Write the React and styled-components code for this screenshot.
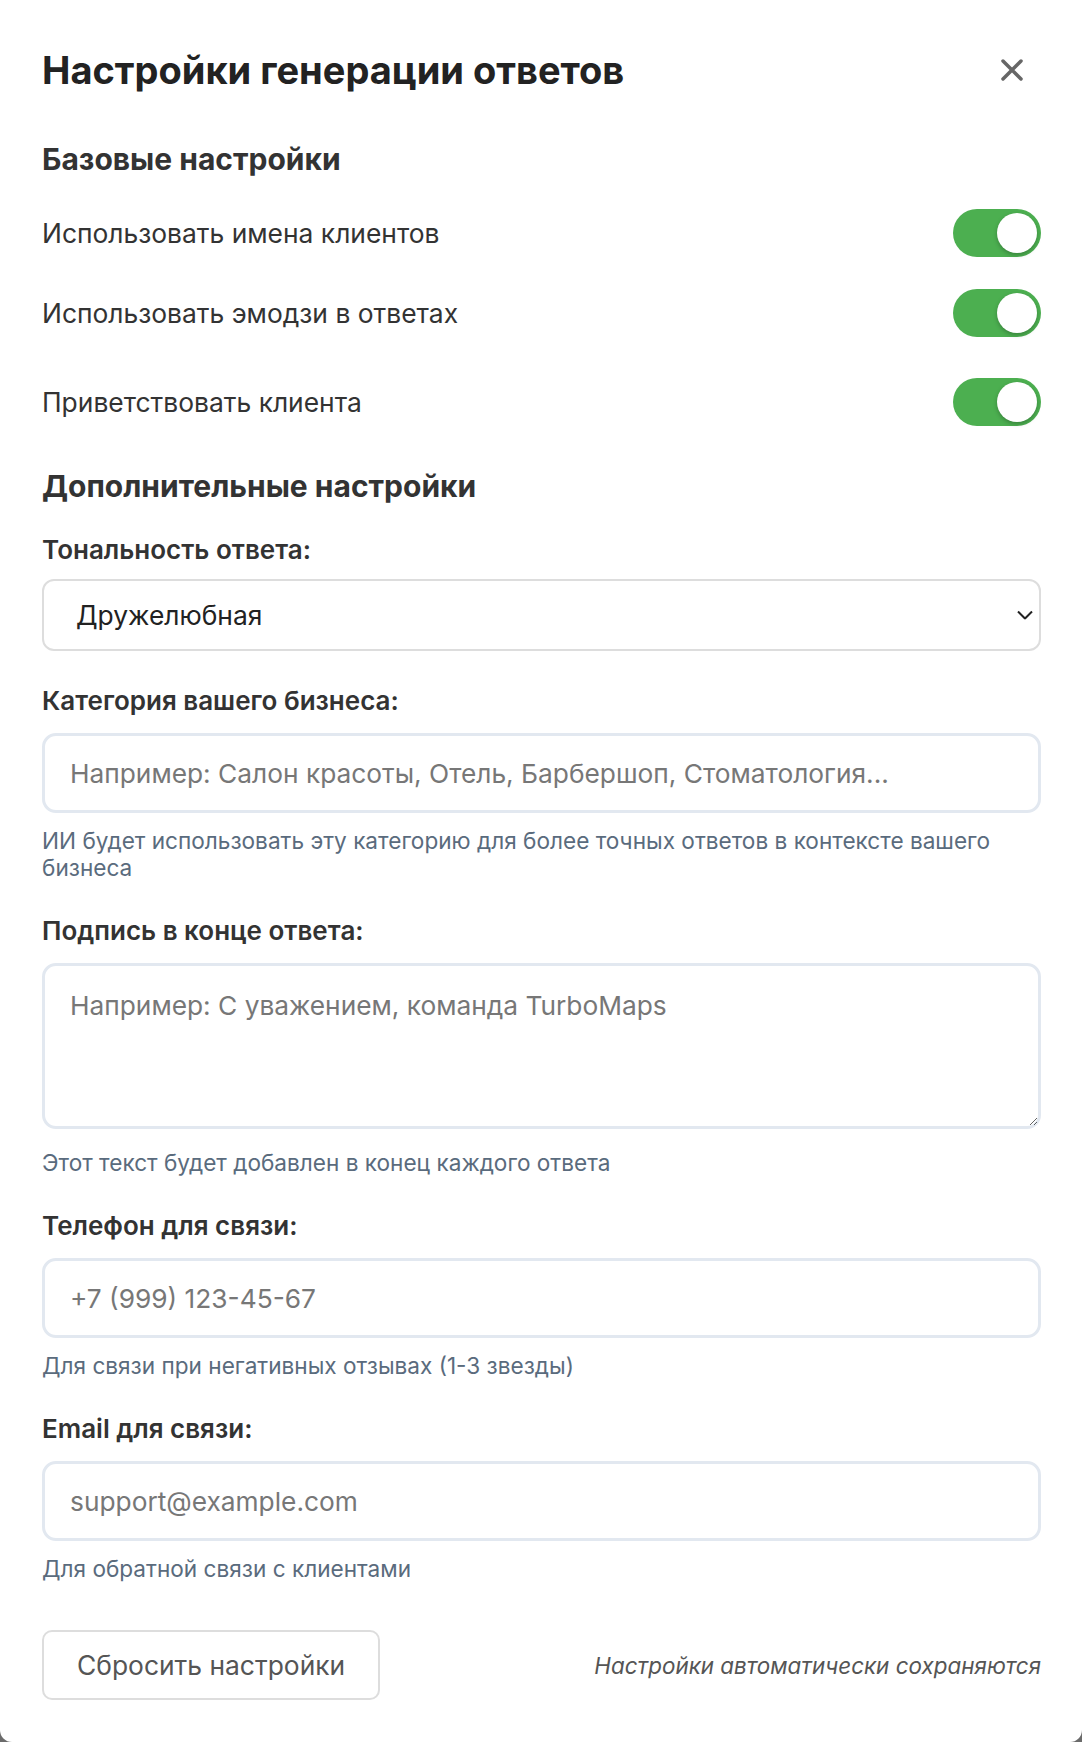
import React, { useState } from "react";
import styled, { createGlobalStyle } from "styled-components";

const FONT = `"Inter", "Noto Sans", sans-serif`;

const GlobalStyle = createGlobalStyle`
  * { box-sizing: border-box; }
  body {
    margin: 0;
    background: #6b6b6b;
    font-family: ${FONT};
  }
`;

const Modal = styled.div`
  width: 1082px;
  min-height: 1742px;
  background: #fff;
  border-radius: 0 0 12px 12px;
  padding: 48px 41px 36px 42px;
  color: #333;
`;

const Header = styled.div`
  display: flex;
  align-items: center;
  justify-content: space-between;
`;

const Title = styled.h2`
  margin: 0;
  font-size: 38px;
  line-height: 44px;
  font-weight: 700;
  color: #222;
`;

const CloseButton = styled.button`
  width: 44px;
  height: 44px;
  margin-right: 7px;
  border: none;
  background: none;
  padding: 0;
  display: flex;
  align-items: center;
  justify-content: center;
  cursor: pointer;
`;

const SectionTitle = styled.h3`
  margin: ${(p) => p.$top}px 0 0;
  font-size: 30px;
  line-height: 34px;
  font-weight: 700;
  color: #333;
`;

const ToggleRow = styled.div`
  display: flex;
  align-items: center;
  justify-content: space-between;
  margin-top: ${(p) => p.$top}px;
  font-size: 26.4px;
  color: #333;
`;

const Track = styled.button`
  position: relative;
  width: 88px;
  height: 48px;
  border: none;
  border-radius: 24px;
  background: ${(p) => (p.$on ? "#4caf50" : "#ccc")};
  padding: 0;
  cursor: pointer;
`;

const Knob = styled.span`
  position: absolute;
  top: 4px;
  left: ${(p) => (p.$on ? "44px" : "4px")};
  width: 40px;
  height: 40px;
  border-radius: 50%;
  background: #fff;
  box-shadow: 0 2px 4px rgba(0, 0, 0, 0.25);
  transition: left 0.2s;
`;

const Field = styled.div`
  margin-top: ${(p) => p.$top}px;
`;

const Label = styled.label`
  display: block;
  font-size: 26px;
  line-height: 30px;
  font-weight: 600;
  color: #333;
  margin-bottom: 17px;
`;

const SelectWrap = styled.div`
  position: relative;
  margin-top: -3px;
`;

const Select = styled.select`
  display: block;
  width: 100%;
  height: 72px;
  appearance: none;
  border: 2px solid #ddd;
  border-radius: 12px;
  background: #fff;
  padding: 0 48px 0 32px;
  font-family: ${FONT};
  font-size: 26.4px;
  color: #222;
`;

const Chevron = styled.svg`
  position: absolute;
  right: 8px;
  top: 50%;
  transform: translateY(-50%);
  pointer-events: none;
`;

const Input = styled.input`
  display: block;
  width: 100%;
  height: 80px;
  border: 3px solid #e2e8f0;
  border-radius: 14px;
  padding: 0 25px;
  font-family: ${FONT};
  font-size: 26.3px;
  color: #333;
  &::placeholder {
    color: #777;
  }
`;

const TextArea = styled.textarea`
  display: block;
  width: 100%;
  height: 166px;
  border: 3px solid #e2e8f0;
  border-radius: 14px;
  padding: 24px 25px;
  resize: vertical;
  font-family: ${FONT};
  font-size: 26.3px;
  color: #333;
  &::placeholder {
    color: #777;
  }
`;

const Hint = styled.div`
  margin-top: ${(p) => p.$top || 14}px;
  font-size: 22.6px;
  line-height: 27px;
  color: #5a6b7d;
`;

const Footer = styled.div`
  display: flex;
  align-items: center;
  justify-content: space-between;
  margin-top: 48px;
`;

const ResetButton = styled.button`
  height: 70px;
  padding: 0 33px;
  border: 2px solid #ddd;
  border-radius: 10px;
  background: #fff;
  font-family: ${FONT};
  font-size: 26.4px;
  color: #555;
  cursor: pointer;
`;

const AutoSave = styled.span`
  font-size: 22.4px;
  font-style: italic;
  color: #555;
`;

const Toggle = ({ on, onChange }) => (
  <Track $on={on} onClick={onChange}>
    <Knob $on={on} />
  </Track>
);

const toggles = [
  { key: "names", label: "Использовать имена клиентов", top: 33 },
  { key: "emoji", label: "Использовать эмодзи в ответах", top: 32 },
  { key: "greet", label: "Приветствовать клиента", top: 41 },
];

export default function App() {
  const [state, setState] = useState({ names: true, emoji: true, greet: true });

  return (
    <>
      <GlobalStyle />
      <Modal>
        <Header>
          <Title>Настройки генерации ответов</Title>
          <CloseButton aria-label="Закрыть">
            <svg width="22" height="22" viewBox="0 0 22 22">
              <path d="M2 2L20 20M20 2L2 20" stroke="#666" strokeWidth="3.5" strokeLinecap="round" />
            </svg>
          </CloseButton>
        </Header>

        <SectionTitle $top={50}>Базовые настройки</SectionTitle>
        {toggles.map((t) => (
          <ToggleRow key={t.key} $top={t.top}>
            <span>{t.label}</span>
            <Toggle on={state[t.key]} onChange={() => setState({ ...state, [t.key]: !state[t.key] })} />
          </ToggleRow>
        ))}

        <SectionTitle $top={43}>Дополнительные настройки</SectionTitle>

        <Field $top={32}>
          <Label>Тональность ответа:</Label>
          <SelectWrap>
            <Select defaultValue="friendly">
              <option value="friendly">Дружелюбная</option>
              <option value="formal">Официальная</option>
              <option value="neutral">Нейтральная</option>
            </Select>
            <Chevron width="16" height="9" viewBox="0 0 16 9">
              <path d="M1 1L8 8L15 1" stroke="#222" strokeWidth="2" fill="none" />
            </Chevron>
          </SelectWrap>
        </Field>

        <Field $top={35}>
          <Label>Категория вашего бизнеса:</Label>
          <Input placeholder="Например: Салон красоты, Отель, Барбершоп, Стоматология..." />
          <Hint>ИИ будет использовать эту категорию для более точных ответов в контексте вашего бизнеса</Hint>
        </Field>

        <Field $top={35}>
          <Label>Подпись в конце ответа:</Label>
          <TextArea placeholder="Например: С уважением, команда TurboMaps" />
          <Hint $top={20}>Этот текст будет добавлен в конец каждого ответа</Hint>
        </Field>

        <Field $top={35}>
          <Label>Телефон для связи:</Label>
          <Input placeholder="+7 (999) 123-45-67" />
          <Hint>Для связи при негативных отзывах (1-3 звезды)</Hint>
        </Field>

        <Field $top={35}>
          <Label>Email для связи:</Label>
          <Input placeholder="support@example.com" />
          <Hint>Для обратной связи с клиентами</Hint>
        </Field>

        <Footer>
          <ResetButton>Сбросить настройки</ResetButton>
          <AutoSave>Настройки автоматически сохраняются</AutoSave>
        </Footer>
      </Modal>
    </>
  );
}
